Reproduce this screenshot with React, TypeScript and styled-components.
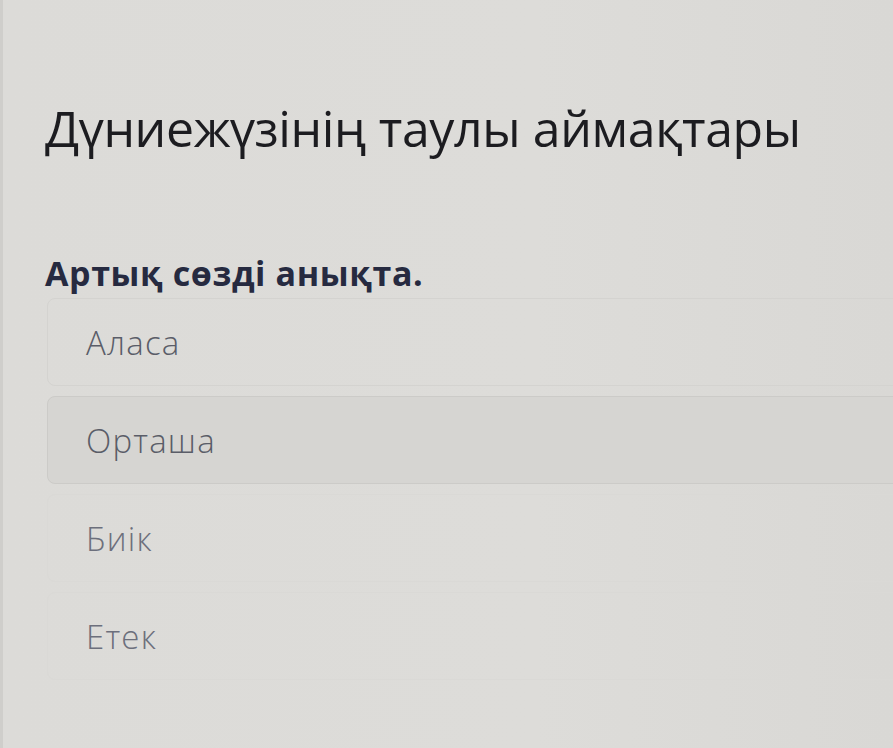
import styled, { createGlobalStyle } from "styled-components";

const GlobalStyle = createGlobalStyle`
    html, body {
        margin: 0;
        padding: 0;
        background: #dbdad7;
    }
    body {
        font-family: "Open Sans", "Noto Sans", sans-serif;
    }
`;

const Page = styled.div`
    min-height: 748px;
    background: linear-gradient(90deg, #cfcecb 0px, #cfcecb 3px, #dcdbd8 3px, #dddcd9 60%, #d9d8d5 100%);
    padding: 94px 0 0 45px;
    box-sizing: border-box;
    overflow: hidden;
`;

const Title = styled.h1`
    margin: 0;
    font-size: 50px;
    font-weight: 400;
    line-height: 68px;
    color: #1c1c20;
    letter-spacing: -0.4px;
`;

const Question = styled.h2`
    margin: 90px 0 0;
    font-size: 34px;
    font-weight: 700;
    line-height: 42px;
    letter-spacing: 0.6px;
    color: #262a40;
`;

const Options = styled.div`
    display: flex;
    flex-direction: column;
    gap: 10px;
    margin-top: 4px;
    margin-right: -20px;
`;

const Option = styled.div<{ active?: boolean; faded?: boolean }>`
    display: flex;
    align-items: center;
    height: 86px;
    padding-left: 38px;
    margin-left: 2px;
    border: 1px solid ${props => (props.active ? "#cccbc8" : props.faded ? "#dad9d6" : "#d4d3d0")};
    border-radius: 8px;
    background: ${props => (props.active ? "#d6d5d2" : "transparent")};
    font-size: 33px;
    font-weight: 300;
    letter-spacing: 1.2px;
    color: ${props => (props.faded ? "#6c6f7c" : "#5a5d68")};
`;

const options = ["Аласа", "Орташа", "Биік", "Етек"];

function App() {
    return (
        <>
            <GlobalStyle />
            <Page>
                <Title>Дүниежүзінің таулы аймақтары</Title>
                <Question>Артық сөзді анықта.</Question>
                <Options>
                    {options.map((text, i) => (
                        <Option key={text} active={i === 1} faded={i > 1}>
                            {text}
                        </Option>
                    ))}
                </Options>
            </Page>
        </>
    );
}

export default App;
